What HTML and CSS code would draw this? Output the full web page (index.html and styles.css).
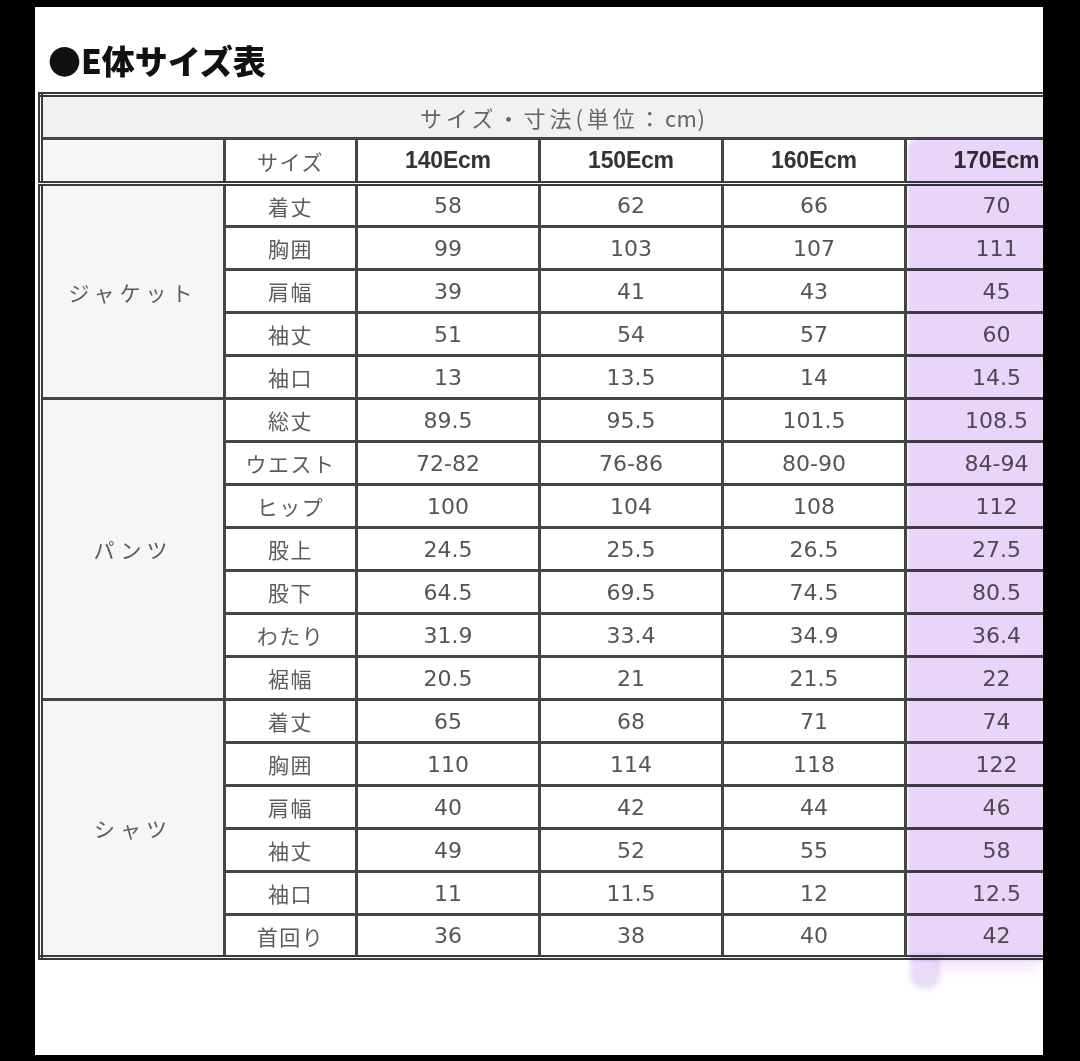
FILE: index.html
```html
<!DOCTYPE html>
<html lang="ja">
<head>
<meta charset="utf-8">
<title>E体サイズ表</title>
<link rel="stylesheet" href="styles.css">
</head>
<body>
<div class="panel">
  <h1 class="title">●E体サイズ表</h1>
  <table class="size-table">
    <colgroup>
      <col class="c-cat"><col class="c-item"><col class="c-val"><col class="c-val"><col class="c-val"><col class="c-val">
    </colgroup>
    <tr class="r-head1"><td colspan="6" class="unit">サイズ・寸法(単位：<span class="cm">cm</span>)</td></tr>
    <tr class="r-head2">
      <td class="cat"></td><td class="item">サイズ</td>
      <td class="size">140Ecm</td><td class="size">150Ecm</td><td class="size">160Ecm</td><td class="size">170Ecm</td>
    </tr>
    <tr><td class="cat" rowspan="5">ジャケット</td><td class="item">着丈</td><td>58</td><td>62</td><td>66</td><td>70</td></tr>
    <tr><td class="item">胸囲</td><td>99</td><td>103</td><td>107</td><td>111</td></tr>
    <tr><td class="item">肩幅</td><td>39</td><td>41</td><td>43</td><td>45</td></tr>
    <tr><td class="item">袖丈</td><td>51</td><td>54</td><td>57</td><td>60</td></tr>
    <tr><td class="item">袖口</td><td>13</td><td>13.5</td><td>14</td><td>14.5</td></tr>
    <tr class="grp"><td class="cat" rowspan="7">パンツ</td><td class="item">総丈</td><td>89.5</td><td>95.5</td><td>101.5</td><td>108.5</td></tr>
    <tr><td class="item">ウエスト</td><td>72-82</td><td>76-86</td><td>80-90</td><td>84-94</td></tr>
    <tr><td class="item">ヒップ</td><td>100</td><td>104</td><td>108</td><td>112</td></tr>
    <tr><td class="item">股上</td><td>24.5</td><td>25.5</td><td>26.5</td><td>27.5</td></tr>
    <tr><td class="item">股下</td><td>64.5</td><td>69.5</td><td>74.5</td><td>80.5</td></tr>
    <tr><td class="item">わたり</td><td>31.9</td><td>33.4</td><td>34.9</td><td>36.4</td></tr>
    <tr><td class="item">裾幅</td><td>20.5</td><td>21</td><td>21.5</td><td>22</td></tr>
    <tr class="grp"><td class="cat" rowspan="6">シャツ</td><td class="item">着丈</td><td>65</td><td>68</td><td>71</td><td>74</td></tr>
    <tr><td class="item">胸囲</td><td>110</td><td>114</td><td>118</td><td>122</td></tr>
    <tr><td class="item">肩幅</td><td>40</td><td>42</td><td>44</td><td>46</td></tr>
    <tr><td class="item">袖丈</td><td>49</td><td>52</td><td>55</td><td>58</td></tr>
    <tr><td class="item">袖口</td><td>11</td><td>11.5</td><td>12</td><td>12.5</td></tr>
    <tr><td class="item">首回り</td><td>36</td><td>38</td><td>40</td><td>42</td></tr>
  </table>
  <div class="marker"></div>
  <div class="marker-drip"></div>
  <div class="marker-fade"></div>
</div>
</body>
</html>
```

FILE: styles.css
```css
html, body {
  margin: 0;
  padding: 0;
  background: #000;
}
body {
  width: 1080px;
  height: 1061px;
  overflow: hidden;
}
.panel {
  position: relative;
  margin: 7px 0 0 35px;
  width: 1008px;
  height: 1048px;
  background: #fff;
  overflow: hidden;
  padding: 0 0 0 3px;
  box-sizing: border-box;
}
.title {
  margin: 0;
  padding: 31px 0 0 10px;
  height: 54px;
  font-family: "Noto Sans CJK JP", sans-serif;
  font-weight: 900;
  font-size: 33px;
  line-height: 44px;
  color: #111;
  letter-spacing: 0;
}
.size-table {
  border-collapse: collapse;
  table-layout: fixed;
  width: 1048px;
  border: 5px double #3a3a3a;
}
.c-cat { width: 184px; }
.c-item { width: 132px; }
.c-val { width: 183px; }
.size-table td {
  border: 3px solid #454545;
  padding: 0;
  text-align: center;
  vertical-align: middle;
  font-family: "DejaVu Sans", sans-serif;
  font-size: 22px;
  color: #555;
  background: #fff;
}
.size-table tr { height: 43px; }
.size-table .r-head1 { height: 44px; }
.size-table .r-head2 { height: 45px; }
.size-table .r-head2 td { border-bottom: 5px double #3a3a3a; }
.size-table .unit {
  background: #f1f1f1;
  font-family: "Noto Sans CJK JP", sans-serif;
  font-size: 22px;
  letter-spacing: 4px;
  color: #666;
}
.size-table .unit .cm { letter-spacing: 0.5px; }
.size-table .cat {
  background: #f6f6f6;
  font-family: "Noto Sans CJK JP", sans-serif;
  font-size: 21px;
  letter-spacing: 5px;
  color: #5c5c5c;
}
.size-table .item {
  font-family: "Noto Sans CJK JP", sans-serif;
  font-size: 21px;
  letter-spacing: 1.5px;
  color: #5c5c5c;
}
.size-table .size {
  font-family: "Liberation Sans", Arial, sans-serif;
  font-weight: 700;
  font-size: 23px;
  letter-spacing: -0.2px;
  color: #333;
}
.marker {
  position: absolute;
  left: 873px;
  top: 131px;
  width: 145px;
  height: 823px;
  background: #e8d5f7;
  mix-blend-mode: multiply;
  border-radius: 12px 0 0 6px;
  filter: blur(1.5px);
}
.marker-drip {
  position: absolute;
  left: 875px;
  top: 948px;
  width: 30px;
  height: 34px;
  background: #ebdcf8;
  mix-blend-mode: multiply;
  border-radius: 0 0 12px 14px;
  filter: blur(2.5px);
}
.marker-fade {
  position: absolute;
  left: 900px;
  top: 950px;
  width: 108px;
  height: 14px;
  background: #f4edfb;
  mix-blend-mode: multiply;
  border-radius: 0 0 40px 20px;
  filter: blur(4px);
}
```
